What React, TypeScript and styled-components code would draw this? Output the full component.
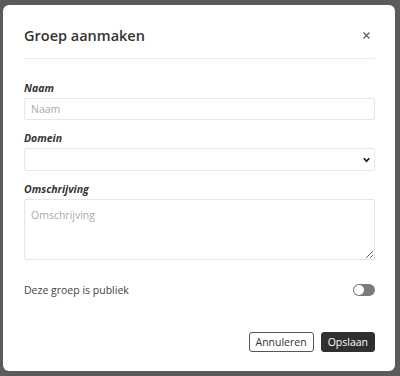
import React from "react";
import styled, { createGlobalStyle } from "styled-components";

const Global = createGlobalStyle`
  html, body { margin: 0; padding: 0; background: #5b5b5b; }
  body { font-family: "Open Sans", "Liberation Sans", sans-serif; }
  #root { width: 400px; height: 376px; }
`;

const Backdrop = styled.div`
  width: 400px;
  height: 376px;
  padding: 5px 5px 5px 3px;
  box-sizing: border-box;
`;

const Modal = styled.div`
  width: 392px;
  height: 366px;
  box-sizing: border-box;
  background: #fff;
  border-radius: 6px;
  padding: 0 20px 0 21px;
  display: flex;
  flex-direction: column;
`;

const Header = styled.div`
  height: 54px;
  flex: none;
  display: flex;
  align-items: center;
  justify-content: space-between;
  padding-top: 8px;
  box-sizing: border-box;
  border-bottom: 1px solid #ebebeb;
`;

const Title = styled.h2`
  margin: 0;
  font-size: 14.5px;
  font-weight: 600;
  color: #333;
  line-height: 20px;
`;

const Close = styled.button`
  border: 0;
  background: none;
  padding: 0;
  margin-right: 4px;
  width: 10px;
  height: 10px;
  display: flex;
  align-items: center;
  justify-content: center;
  cursor: pointer;
`;

const Body = styled.form`
  padding-top: 23px;
  display: flex;
  flex-direction: column;
  flex: 1;
`;

const Field = styled.div<{ $last?: boolean }>`
  display: flex;
  flex-direction: column;
  margin-bottom: ${(p) => (p.$last ? "0" : "12px")};
`;

const Label = styled.label`
  font-size: 10.5px;
  line-height: 13px;
  font-weight: 700;
  font-style: italic;
  color: #333;
  margin-bottom: 3px;
`;

const controlBase = `
  box-sizing: border-box;
  width: 100%;
  border: 1px solid #e6e6e6;
  border-radius: 2px;
  background: #fff;
  font-family: "Open Sans", "Liberation Sans", sans-serif;
  font-size: 10.5px;
  color: #333;
  outline: none;
  &::placeholder { color: #aaa; }
`;

const Input = styled.input`
  ${controlBase}
  height: 22px;
  padding: 0 6px;
`;

const SelectWrap = styled.div`
  position: relative;
`;

const Select = styled.select`
  ${controlBase}
  height: 23px;
  padding: 0 6px;
  appearance: none;
  display: block;
`;

const Chevron = styled.svg`
  position: absolute;
  right: 5px;
  top: 9px;
  pointer-events: none;
`;

const TextArea = styled.textarea`
  ${controlBase}
  display: block;
  height: 61px;
  padding: 8px 6px;
  resize: vertical;
  line-height: 14px;
`;

const ToggleRow = styled.div`
  margin-top: 22px;
  display: flex;
  align-items: center;
  justify-content: space-between;
  height: 16px;
`;

const ToggleText = styled.span`
  font-size: 10.5px;
  color: #444;
`;

const Track = styled.button<{ $on?: boolean }>`
  width: 22px;
  height: 12px;
  border: 0;
  padding: 0;
  border-radius: 6px;
  background: ${(p) => (p.$on ? "#333" : "#7b7b7b")};
  position: relative;
  cursor: pointer;
`;

const Knob = styled.span<{ $on?: boolean }>`
  position: absolute;
  top: 1px;
  left: ${(p) => (p.$on ? "11px" : "1px")};
  width: 10px;
  height: 10px;
  border-radius: 50%;
  background: #fff;
`;

const Footer = styled.div`
  margin-top: auto;
  margin-bottom: 19px;
  display: flex;
  justify-content: flex-end;
  gap: 7px;
`;

const Button = styled.button<{ $primary?: boolean }>`
  height: 20px;
  box-sizing: border-box;
  padding: 0 6px;
  border-radius: 3px;
  font-family: "Open Sans", "Liberation Sans", sans-serif;
  font-size: 10.5px;
  line-height: 18px;
  cursor: pointer;
  border: 1px solid ${(p) => (p.$primary ? "#2f2f2f" : "#555")};
  background: ${(p) => (p.$primary ? "#2f2f2f" : "#fff")};
  color: ${(p) => (p.$primary ? "#fff" : "#333")};
`;

export default function App() {
  return (
    <>
      <Global />
      <Backdrop>
        <Modal>
          <Header>
            <Title>Groep aanmaken</Title>
            <Close aria-label="Sluiten">
              <svg width="7" height="7" viewBox="0 0 7 7">
                <path d="M0.5 0.5 L6.5 6.5 M6.5 0.5 L0.5 6.5" stroke="#555" strokeWidth="1.1" />
              </svg>
            </Close>
          </Header>
          <Body onSubmit={(e) => e.preventDefault()}>
            <Field>
              <Label htmlFor="naam">Naam</Label>
              <Input id="naam" placeholder="Naam" />
            </Field>
            <Field>
              <Label htmlFor="domein">Domein</Label>
              <SelectWrap>
                <Select id="domein" defaultValue="">
                  <option value=""></option>
                </Select>
                <Chevron width="7" height="6" viewBox="0 0 7 6">
                  <path d="M0.8 1.2 L3.5 4.2 L6.2 1.2" fill="none" stroke="#111" strokeWidth="1.6" />
                </Chevron>
              </SelectWrap>
            </Field>
            <Field $last>
              <Label htmlFor="omschrijving">Omschrijving</Label>
              <TextArea id="omschrijving" placeholder="Omschrijving" />
            </Field>
            <ToggleRow>
              <ToggleText>Deze groep is publiek</ToggleText>
              <Track type="button" aria-label="Publiek">
                <Knob />
              </Track>
            </ToggleRow>
            <Footer>
              <Button type="button">Annuleren</Button>
              <Button type="submit" $primary>Opslaan</Button>
            </Footer>
          </Body>
        </Modal>
      </Backdrop>
    </>
  );
}
